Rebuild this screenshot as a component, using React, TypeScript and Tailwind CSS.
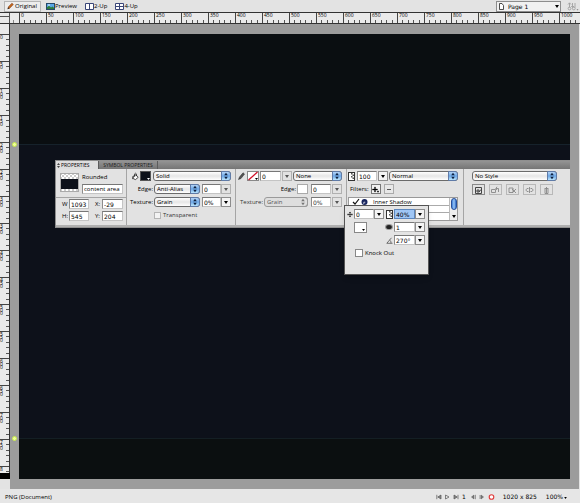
import { ReactNode } from 'react';
import clsx from 'clsx';

const hMarks = Array.from({ length: 21 }, (_, i) => i * 50);
// the last mark is cut short by the end of the ruler
const vMarks = [...Array.from({ length: 16 }, (_, i) => String(i * 50)), '8'];

function Stepper({ muted }: { muted?: boolean }) {
  return (
    <span
      className={clsx(
        'pointer-events-none absolute inset-y-0 right-0 flex w-[10px] items-center justify-center rounded-r-[3px] border',
        muted ? 'border-[#9a9a9a] border-l-transparent' : 'border-[#5f7ba8] bg-linear-to-b from-[#b5d5f6] via-[#6ba6e6] to-[#bce6fc]',
      )}
    >
      <svg viewBox="0 0 6 8" className={clsx('h-[8px] w-[6px]', muted ? 'fill-[#777]' : 'fill-[#10223f]')}>
        <path d="M3 .8 4.800 3.2H1.200zM3 7.2 1.200 4.800h3.600z" />
      </svg>
    </span>
  );
}

function Select({ label, value, className, muted }: { label: string; value: string; className: string; muted?: boolean }) {
  return (
    <span className={clsx('relative h-[10px]', className)}>
      <select
        aria-label={label}
        disabled={muted}
        className={clsx(
          'block h-[10px] w-full appearance-none rounded-[3px] border pl-[2px] leading-[8px] opacity-100',
          muted ? 'border-[#9a9a9a] bg-[#dedede] text-[#555]' : 'border-[#6b6b6b] bg-linear-to-b from-white via-[#e6e6e6] to-white',
        )}
      >
        <option>{value}</option>
      </select>
      <Stepper muted={muted} />
    </span>
  );
}

function Field({ label, value, className, selected, text }: { label: string; value: string; className: string; selected?: boolean; text?: boolean }) {
  return (
    <input
      aria-label={label}
      defaultValue={value}
      className={clsx(
        'h-[10px] min-w-0 border pl-px leading-[8px]',
        !text && "font-['DejaVu_Sans',sans-serif] font-normal",
        selected ? 'border-[#5c86bd] bg-[#9fc6f5]' : 'border-[#c4c4c4] border-t-[#777] border-l-[#8c8c8c] bg-white',
        className,
      )}
    />
  );
}

function Drop({ label, muted }: { label: string; muted?: boolean }) {
  return (
    <button
      aria-label={label}
      className={clsx(
        'flex h-[10px] w-[10px] shrink-0 items-center justify-center border',
        muted ? 'border-[#b0b0b0] bg-[#e2e2e2]' : 'border-[#8d8d8d] bg-[#f4f4f4]',
      )}
    >
      <svg viewBox="0 0 4 3" className={clsx('h-[3px] w-[4px]', muted ? 'fill-[#555]' : 'fill-black')}>
        <path d="M0 0h4L2 3z" />
      </svg>
    </button>
  );
}

function Row({ children, className }: { children: ReactNode; className?: string }) {
  return <div className={clsx('flex h-[10px] items-center', className)}>{children}</div>;
}

function OpacityIcon() {
  return (
    <svg viewBox="0 0 7 9" className="h-[9px] w-[7px] shrink-0">
      <rect x=".5" y=".5" width="6" height="8" fill="#fff" stroke="#333" />
      <path d="M3 1h1.500v1.500H3zM4.500 2.500H6V4H4.500zM3 4h1.500v1.500H3zM4.500 5.500H6V7H4.500z" fill="#555" />
    </svg>
  );
}

function TopBar() {
  return (
    <header className="flex h-[12px] items-center bg-[#e3e3e3]">
      <button className="ml-[4px] flex h-[11px] w-[37px] items-center border border-[#b5b5b5] bg-[#ededed] pl-[2px]">
        <svg viewBox="0 0 8 8" className="mr-px h-[8px] w-[7px]">
          <path d="M1.2 5.4 5.6.8l1.6 1.4L2.8 6.8z" fill="#c96a1e" stroke="#6d2e0c" strokeWidth=".6" />
          <path d="M1.2 5.4.4 7.6l2.4-.8z" fill="#2a1608" />
        </svg>
        Original
      </button>
      <button className="ml-[5px] flex items-center">
        <svg viewBox="0 0 9 7" className="h-[7px] w-[9px]">
          <rect x=".5" y=".5" width="8" height="6" fill="#5aa7e8" stroke="#27496a" />
          <path d="M1 6V4.2l2-1.4 2 1.6L6.4 3.6 8 4.8V6z" fill="#2e7d3c" />
          <circle cx="3" cy="2" r=".8" fill="#fff" />
        </svg>
        Preview
      </button>
      <button className="ml-[8px] flex items-center">
        <svg viewBox="0 0 9 7" className="h-[7px] w-[9px]">
          <path d="M.5.5h8v6h-8zM4.500.5v6" fill="#fff" stroke="#3a4678" />
        </svg>
        2-Up
      </button>
      <button className="ml-[8px] flex items-center">
        <svg viewBox="0 0 9 7" className="h-[7px] w-[9px]">
          <path d="M.5.5h8v6h-8zM4.500.5v6M.5 3.500h8" fill="#fff" stroke="#3a4678" />
        </svg>
        4-Up
      </button>
      <span className="relative ml-auto flex h-[11px] w-[65px]">
        <select aria-label="Page" className="w-full appearance-none border border-[#8d8d8d] bg-[#f1f1f1] pl-[11px] font-['DejaVu_Sans',sans-serif] leading-[9px] font-normal">
          <option>Page 1</option>
        </select>
        <svg viewBox="0 0 5 7" className="pointer-events-none absolute top-[2px] left-[3px] h-[7px] w-[5px]">
          <path d="M.5.5h2.500l1.500 2v4h-4z" fill="#fff" stroke="#222" strokeWidth=".8" />
        </svg>
        <svg viewBox="0 0 4 3" className="pointer-events-none absolute top-[4px] right-[2px] h-[3px] w-[4px]">
          <path d="M0 0h4L2 3z" />
        </svg>
      </span>
      <button aria-label="Import and export" className="mr-px ml-[6px]">
        <svg viewBox="0 0 12 9" className="h-[9px] w-[12px]" fill="none" stroke="#999" strokeWidth=".8">
          <path d="M1 2.500 2.500.8 4 2.500M2.500 1v4.500M5.500 1v4M4.200 4 5.500 5.500 7 4M8 1v4.500" />
          <circle cx="2.500" cy="6.500" r="1.400" />
          <circle cx="6.800" cy="6.500" r="1.400" />
          <path d="M9.500 7.200h2L10.500 8.500z" fill="#777" stroke="none" />
        </svg>
      </button>
    </header>
  );
}

function HorizontalRuler() {
  return (
    <div className="flex h-[12px] overflow-hidden border-y border-[#333] bg-[#eaeaea] text-[5px]">
      <div className="w-[19px] shrink-0">
        <svg viewBox="0 0 19 10" className="h-[10px] w-[19px]" stroke="#555">
          <path d="M9.500 0v10M0 3.500h10" />
          <path d="M13.500 7v3" stroke="#888" />
        </svg>
      </div>
      {hMarks.map((n) => (
        <div key={n} className="relative w-[27px] shrink-0 border-l border-[#444]">
          <span className="block pl-px leading-[5px]">{n}</span>
          <svg viewBox="0 0 26 3" className="absolute bottom-0 left-0 h-[3px] w-[26px]" stroke="#555">
            <path d="M4.500 0v3M10.500 0v3M15.500 0v3M21.500 0v3" />
          </svg>
        </div>
      ))}
    </div>
  );
}

function VerticalRuler() {
  return (
    <div className="flex w-[10px] shrink-0 flex-col bg-[#e3e3e3]">
      <div className="relative min-h-0 flex-1">
        <div className="absolute inset-0 flex flex-col overflow-hidden border-r border-[#333] bg-[#eaeaea] pt-[10px] text-[5px]">
          {vMarks.map((n) => (
            <div key={n} className="relative h-[27px] shrink-0 border-t border-[#444]">
              <span className="block w-[3px] pt-px leading-[3px] break-all">{n}</span>
              <svg viewBox="0 0 3 26" className="absolute top-0 right-0 h-[26px] w-[3px]" stroke="#555">
                <path d="M0 4.500h3M0 10.500h3M0 15.500h3M0 21.500h3" />
              </svg>
            </div>
          ))}
        </div>
      </div>
      <div className="mb-[10px] h-[6px] bg-black" />
    </div>
  );
}

function LayerSection() {
  const dims = [
    ['W', '1093', 'X:', '-29'],
    ['H:', '545', 'Y:', '204'],
  ];
  return (
    <section className="w-[71px] shrink-0 border-r border-[#a5a5a5]">
      <div className="flex h-[29px] border-b border-[#a5a5a5] pt-[4px] pl-[4px]">
        <svg viewBox="0 0 19 19" className="h-[19px] w-[19px] shrink-0">
          <defs>
            <pattern id="checker" width="4" height="4" patternUnits="userSpaceOnUse">
              <path d="M0 0h4v4H0z" fill="#fff" />
              <path d="M0 0h2v2H0zM2 2h2v2H2z" fill="#ccc" />
            </pattern>
          </defs>
          <rect x=".5" y=".5" width="18" height="18" fill="url(#checker)" stroke="#aaa" />
          <rect x="1" y="6" width="17" height="10" fill="#0d111a" />
        </svg>
        <div className="ml-[3px] flex flex-col gap-[3px]">
          <span className="leading-[8px]">Rounded</span>
          <Field label="Layer name" value="content area" className="w-[41px]" text />
        </div>
      </div>
      <div className="flex flex-col gap-[2px] pt-px">
        {dims.map(([a, av, b, bv]) => (
          <Row key={a}>
            <span className="w-[13px] pl-[6px]">{a}</span>
            <Field label={a} value={av} className="w-[20px]" />
            <span className="w-[13px] pl-[6px]">{b}</span>
            <Field label={b} value={bv} className="w-[21px]" />
          </Row>
        ))}
      </div>
    </section>
  );
}

function FillSection() {
  return (
    <section className="flex w-[109px] shrink-0 flex-col gap-[3px] border-r border-[#a5a5a5] pt-[2px] pr-[4px]">
      <Row>
        <svg viewBox="0 0 8 9" className="ml-[5px] h-[9px] w-[7px]" fill="#fff" stroke="#222" strokeWidth=".9">
          <path d="M1.500 4 4.500 2.500 7 5.500 4 8 1.500 7zM3 5V1.500q1-1.500 2 0V4" />
          <path d="M1.500 4Q0 5 .8 7.500" />
        </svg>
        <button aria-label="Fill colour" className="ml-px flex h-[10px] w-[11px] items-end justify-end border border-[#555] bg-[#0d111a]">
          <svg viewBox="0 0 3 2" className="h-[2px] w-[3px] fill-white"><path d="M0 0h3L1.500 2z" /></svg>
        </button>
        <Select label="Fill" value="Solid" className="ml-auto w-[78px]" />
      </Row>
      <Row>
        <span className="w-[26px] text-right">Edge:</span>
        <Select label="Fill edge" value="Anti-Alias" className="ml-px w-[46px]" />
        <Field label="Fill edge amount" value="0" className="ml-[2px] w-[19px]" />
        <span className="ml-auto"><Drop label="Fill edge menu" muted /></span>
      </Row>
      <Row>
        <span className="w-[26px] text-right">Texture:</span>
        <Select label="Fill texture" value="Grain" className="ml-px w-[46px]" />
        <Field label="Fill texture amount" value="0%" className="ml-[2px] w-[19px]" />
        <span className="ml-auto"><Drop label="Fill texture menu" /></span>
      </Row>
      <label className="flex h-[10px] items-center gap-[2px] pl-[27px] text-[#333]">
        <input type="checkbox" className="h-[7px] w-[7px] appearance-none border border-[#b5b5b5] bg-[#f3f3f3]" />
        Transparent
      </label>
    </section>
  );
}

function StrokeSection() {
  return (
    <section className="flex w-[111px] shrink-0 flex-col gap-[3px] border-r border-[#a5a5a5] pt-[2px] pr-[4px]">
      <Row>
        <svg viewBox="0 0 7 8" className="ml-[2px] h-[8px] w-[7px]">
          <path d="M.5 7.500 1.500 5 5 .8 6.500 2 3 6.500z" fill="#555" stroke="#222" strokeWidth=".5" />
        </svg>
        <button aria-label="Stroke colour" className="ml-[2px]">
          <svg viewBox="0 0 12 10" className="h-[10px] w-[12px]">
            <rect x=".5" y=".5" width="11" height="9" fill="#fff" stroke="#888" />
            <path d="M1.500 9 10.500 1" stroke="#d2122a" strokeWidth="1.300" />
            <path d="M8 7h3L9.500 9z" />
          </svg>
        </button>
        <Field label="Stroke size" value="0" className="mr-px ml-px w-[21px]" />
        <Drop label="Stroke size menu" muted />
        <Select label="Stroke" value="None" className="ml-auto w-[49px]" />
      </Row>
      <Row className="justify-end">
        <span>Edge:</span>
        <button aria-label="Edge softness" className="ml-px h-[10px] w-[11px] border border-[#aaa] bg-white" />
        <Field label="Stroke edge" value="0" className="mr-px ml-[3px] w-[20px]" />
        <Drop label="Stroke edge menu" muted />
      </Row>
      <Row className="justify-end text-[#333]">
        <span>Texture:</span>
        <Select label="Stroke texture" value="Grain" className="ml-px w-[44px]" muted />
        <Field label="Stroke texture amount" value="0%" className="mr-px ml-[3px] w-[20px]" />
        <Drop label="Stroke texture menu" muted />
      </Row>
    </section>
  );
}

function FilterSection() {
  return (
    <section className="flex w-[117px] shrink-0 flex-col gap-[3px] border-r border-[#a5a5a5] pt-[2px] pr-[5px] pl-px">
      <Row>
        <OpacityIcon />
        <Field label="Opacity" value="100" className="mr-px ml-[2px] w-[20px]" />
        <Drop label="Opacity menu" />
        <Select label="Blend mode" value="Normal" className="ml-auto w-[69px]" />
      </Row>
      <Row>
        <span className="ml-[2px]">Filters:</span>
        <button aria-label="Add filter" className="ml-[2px] flex h-[10px] w-[10px] items-center justify-center border border-[#777] bg-[#f1f1f1]">
          <svg viewBox="0 0 7 7" className="h-[7px] w-[7px]"><path d="M2.500 1h1v2h2v1h-2v2h-1V4h-2V3h2zM5 5h2L6 6.500z" stroke="#000" strokeWidth=".3" /></svg>
        </button>
        <button aria-label="Remove filter" className="ml-[3px] flex h-[10px] w-[10px] items-center justify-center border border-[#aaa] bg-[#e8e8e8]">
          <svg viewBox="0 0 4 1" className="h-px w-[4px]"><path d="M0 0h4v1H0z" fill="#555" /></svg>
        </button>
      </Row>
      <div className="flex h-[24px] border border-[#999] bg-white">
        <div className="flex-1 divide-y divide-[#aaa]">
          <div className="flex h-[8px] items-center overflow-hidden">
            <svg viewBox="0 0 24 8" className="h-[8px] w-[24px] shrink-0">
              <path d="M4 4l2 2 4-5" fill="none" stroke="#111" strokeWidth="1.200" />
              <circle cx="15.500" cy="4" r="3" fill="#16245e" />
              <path d="M14.800 6V4.200h1.500" stroke="#fff" strokeWidth=".7" fill="none" />
            </svg>
            Inner Shadow
          </div>
          <div className="h-[7px]" />
          <div className="h-[6px]" />
        </div>
        <div className="flex w-[8px] flex-col items-center justify-between border-l border-[#bbb] bg-[#eee]">
          <span className="h-[12px] w-[6px] rounded-full border border-[#27509b] bg-linear-to-r from-[#3e7fd8] via-[#9cc8f7] to-[#2c68c4]" />
          <svg viewBox="0 0 4 3" className="mb-[2px] h-[3px] w-[4px]"><path d="M0 0h4L2 3z" /></svg>
        </div>
      </div>
    </section>
  );
}

const styleButtons = [
  { label: 'New style', d: 'M1.500 1.500h6v6h-6zM3 6V4h2v2zM5 6 7 3.500' },
  { label: 'Redefine style', d: 'M.5 3.500h4v3h-4zM5 2.500h2.500v3.500M6 .8 4.800 2.500 6 4' },
  { label: 'Clear overrides', d: 'M1 2h4v4.500H1zM4 3l4 4M8 3 4 7' },
  { label: 'Break link', d: 'M3.500 2.500H2L.8 4 2 5.500h1.500M5.500 2.500H7L8.200 4 7 5.500H5.500M4.500 1v6' },
  { label: 'Delete style', d: 'M2.500 2.500h4M3 3v4.500h3V3M4.500 1v6' },
];

function StyleSection() {
  return (
    <section className="flex flex-1 flex-col gap-[3px] pt-[2px] pl-[8px]">
      <Select label="Style" value="No Style" className="w-[85px]" />
      <div className="flex gap-[4px]">
        {styleButtons.map((b, i) => (
          <button
            key={b.label}
            aria-label={b.label}
            className={clsx('flex h-[11px] w-[13px] items-center justify-center border', i === 0 ? 'border-[#8a8a8a]' : 'border-[#b8b8b8]')}
          >
            <svg viewBox="0 0 9 8" className="h-[8px] w-[9px]" fill="none" stroke={i === 0 ? '#333' : '#888'} strokeWidth=".9">
              <path d={b.d} />
            </svg>
          </button>
        ))}
      </div>
    </section>
  );
}

function ShadowPopover() {
  return (
    <div className="absolute top-[44px] left-[288px] flex h-[70px] w-[85px] flex-col gap-[3px] border border-[#555] bg-[#e4e4e4] pt-[3px] pr-[3px] pl-[2px] shadow-md">
      <Row>
        <svg viewBox="0 0 7 7" className="mr-px h-[7px] w-[6px] shrink-0" stroke="#222" strokeWidth=".9">
          <path d="M3.500.5v6M.5 3.500h6M2.500 1.300h2M2.500 5.700h2M1.300 2.500v2M5.700 2.500v2" />
        </svg>
        <Field label="Distance" value="0" className="w-[20px]" />
        <Drop label="Distance menu" />
        <span className="ml-auto flex items-center">
          <OpacityIcon />
          <Field label="Shadow opacity" value="40%" className="ml-px w-[21px]" selected />
          <Drop label="Shadow opacity menu" />
        </span>
      </Row>
      <Row>
        <button aria-label="Shadow colour" className="ml-[7px] flex h-[11px] w-[13px] items-end justify-end border border-[#888] bg-white">
          <svg viewBox="0 0 4 3" className="h-[3px] w-[4px]"><path d="M0 0h3L1.500 2z" /></svg>
        </button>
        <span className="ml-auto flex items-center">
          <svg viewBox="0 0 8 6" className="h-[6px] w-[8px]">
            <ellipse cx="4" cy="3" rx="4" ry="3" fill="#999" />
            <ellipse cx="4" cy="3" rx="2.800" ry="2" fill="#222" />
          </svg>
          <Field label="Softness" value="1" className="ml-px w-[21px]" />
          <Drop label="Softness menu" />
        </span>
      </Row>
      <Row className="justify-end">
        <svg viewBox="0 0 7 7" className="h-[7px] w-[7px]" fill="none" stroke="#555" strokeWidth=".8">
          <path d="M5.500.8.8 6.300h5.700M3.500 3Q5.500 4 5 6.300" />
        </svg>
        <Field label="Angle" value="270°" className="ml-px w-[21px]" />
        <Drop label="Angle menu" />
      </Row>
      <label className="flex h-[10px] items-center gap-[2px] pl-[8px]">
        <input type="checkbox" className="h-[8px] w-[8px] appearance-none border border-[#888] bg-white" />
        Knock Out
      </label>
    </div>
  );
}

function PropertiesPanel() {
  return (
    <div className="absolute top-[126px] right-0 left-[36px] border border-r-0 border-[#8f8f8f] bg-[#e2e2e2]">
      <div className="flex h-[8px] bg-linear-to-b from-[#949494] to-[#757575] text-[5px] leading-[8px]">
        <button className="flex w-[42px] items-center gap-px bg-[#dedede] pl-px">
          <svg viewBox="0 0 3 5" className="h-[5px] w-[3px]"><path d="M1.500 0 3 2H0zM1.500 5 0 3h3z" fill="#444" /></svg>
          PROPERTIES
        </button>
        <button className="w-[60px] border-x border-[#5c5c5c] text-[#1a1a1a]">SYMBOL PROPERTIES</button>
      </div>
      <div className="flex h-[58px] border-b-2 border-[#b0b0b0]">
        <LayerSection />
        <FillSection />
        <StrokeSection />
        <FilterSection />
        <StyleSection />
      </div>
      <ShadowPopover />
    </div>
  );
}

function GuideDot() {
  return <span className="absolute top-[-3px] left-[-7px] h-[5px] w-[5px] rounded-full border border-[#c6ea4c] bg-[#efff9a]" />;
}

function StatusBar() {
  return (
    <footer className="flex h-[14px] items-center bg-[#e6e6e6] pt-[2px] pr-[13px] pl-[5px]">
      <span>PNG (Document)</span>
      <svg viewBox="0 0 23 6" className="ml-auto h-[6px] w-[23px]" fill="#888" stroke="#555" strokeWidth=".7">
        <path d="M.8.8v4.400M5 1v4L1.800 3z" />
        <path d="M9.500 1v4L13 3z" fill="none" />
        <path d="M18 1v4L21.200 3zM22 .8v4.400" />
      </svg>
      <span className="ml-[3px] font-['DejaVu_Sans',sans-serif] font-normal">1</span>
      <svg viewBox="0 0 24 6" className="ml-[5px] h-[6px] w-[24px]" fill="#777" stroke="#666" strokeWidth=".6">
        <path d="M3 1v4L.5 3zM4.500.8v4.400M9 1v4M10 1v4L12.500 3z" />
        <circle cx="20.500" cy="3" r="2.300" fill="#fff" stroke="#e03a3a" strokeWidth="1.100" />
      </svg>
      <span className="ml-[8px] font-['DejaVu_Sans',sans-serif] font-normal">1020 x 825</span>
      <button className="ml-[9px] flex items-end font-['DejaVu_Sans',sans-serif] font-normal">
        100%
        <svg viewBox="0 0 4 3" className="mb-[2px] ml-px h-[2px] w-[3px]"><path d="M0 0h4L2 3z" /></svg>
      </button>
    </footer>
  );
}

export default function App() {
  return (
    <div className="flex min-h-screen flex-col overflow-hidden bg-[#e3e3e3] font-['Open_Sans','Noto_Sans',sans-serif] text-[6px] leading-[8px] font-medium text-black">
      <TopBar />
      <HorizontalRuler />
      <div className="flex flex-1">
        <VerticalRuler />
        <main className="mr-px flex flex-1 bg-[#9c9c9c] pt-[10px] pr-[9px] pb-[10px] pl-[9px]">
          <div className="relative flex flex-1 flex-col bg-[#0d111a]">
            <div className="h-[110px] bg-[#0a0e11]" />
            <div className="relative flex-1 border-t border-[#16222b]">
              <GuideDot />
            </div>
            <div className="relative h-[41px] border-t border-[#141f24] bg-[#0b0f10]">
              <GuideDot />
            </div>
            <PropertiesPanel />
          </div>
        </main>
      </div>
      <StatusBar />
    </div>
  );
}
